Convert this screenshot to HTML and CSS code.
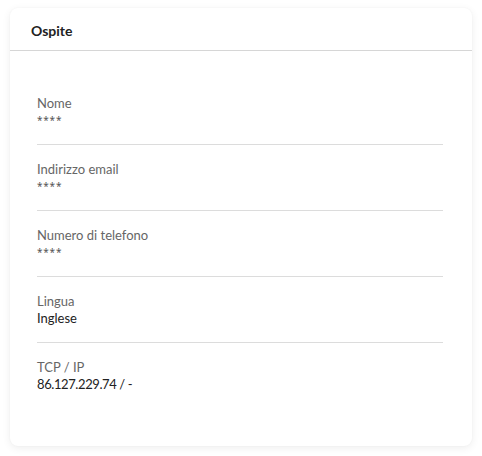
FILE: index.html
```html
<!DOCTYPE html>
<html>
<head>
<meta charset="utf-8">
<link rel="stylesheet" href="styles.css">
</head>
<body>
<div class="card">
  <div class="card-header">Ospite</div>
  <div class="card-body">
    <div class="row">
      <div class="label">Nome</div>
      <div class="value stars">****</div>
    </div>
    <div class="row">
      <div class="label">Indirizzo email</div>
      <div class="value stars">****</div>
    </div>
    <div class="row">
      <div class="label">Numero di telefono</div>
      <div class="value stars">****</div>
    </div>
    <div class="row">
      <div class="label">Lingua</div>
      <div class="value">Inglese</div>
    </div>
    <div class="row">
      <div class="label">TCP / IP</div>
      <div class="value ip">86.127.229.74 / -</div>
    </div>
  </div>
</div>
</body>
</html>
```

FILE: styles.css
```css
html, body {
  margin: 0;
  padding: 0;
  background: #ffffff;
}
body {
  padding: 8px 10px 10px 10px;
  font-family: Lato, "Noto Sans", sans-serif;
  color: #222;
}
.card {
  background: #fff;
  border-radius: 8px;
  box-shadow: 0 2px 8px rgba(0,0,0,0.07), 0 0 2px rgba(0,0,0,0.04);
  height: 438px;
  box-sizing: border-box;
}
.card-header {
  height: 43px;
  box-sizing: border-box;
  border-bottom: 1px solid #d6d6d6;
  padding: 14px 21px 0;
  font-size: 14px;
  font-weight: 700;
  line-height: 18px;
  color: #222;
}
.card-body {
  padding: 28px 29px 0 27px;
}
.row {
  padding: 16px 0 15px;
  border-bottom: 1px solid #dcdcdc;
}
.row:last-child {
  border-bottom: none;
}
.label {
  font-size: 13px;
  line-height: 17px;
  color: #666;
}
.value {
  font-size: 13px;
  line-height: 17px;
  color: #222;
}
.stars {
  font-family: "Noto Sans", sans-serif;
  font-size: 10px;
  letter-spacing: 0.8px;
  color: #555;
}
.ip {
  letter-spacing: -0.4px;
}
```
